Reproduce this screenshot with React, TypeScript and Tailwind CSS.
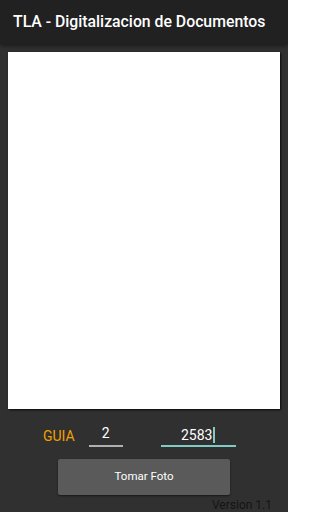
import { useState } from 'react';

const App = () => {
  const [guia, setGuia] = useState('2');
  const numero = '2583';

  return (
    <div className="flex h-[512px] w-[288px] flex-col overflow-hidden bg-[#303030] font-['Roboto',sans-serif]">
      <header className="relative z-10 flex h-[44px] shrink-0 items-center bg-[#212121] pl-[13px] shadow-[0_2px_4px_rgba(0,0,0,0.45)]">
        <h1 className="text-[15.8px] font-medium text-white">TLA - Digitalizacion de Documentos</h1>
      </header>

      <div className="ml-[8px] mt-[8px] h-[357px] w-[272px] shrink-0 bg-white shadow-[1px_1px_2px_rgba(0,0,0,0.8)]" />

      <div className="mt-[14px] flex h-[24px] shrink-0 items-end">
        <span className="ml-[43px] pb-[4px] text-[14px] leading-none text-[#f0a000]">GUIA</span>
        <label className="ml-[14px] flex w-[34px] flex-col items-center">
          <input
            value={guia}
            onChange={(e) => setGuia(e.target.value)}
            className="w-full bg-transparent text-center text-[14px] leading-none text-white outline-none"
          />
          <span className="mt-[4px] h-[2px] w-full bg-[#b0b0b0]" />
        </label>
        <div className="ml-[38px] flex w-[75px] flex-col items-center">
          <span className="flex items-center text-[14px] leading-none text-white">
            {numero}
            <span className="ml-[1px] h-[16px] w-[2px] bg-[#80cbc4]" />
          </span>
          <span className="mt-[2px] h-[2px] w-full bg-[#80cbc4]" />
        </div>
      </div>

      <button className="ml-[58px] mt-[12px] h-[36px] w-[172px] shrink-0 rounded-[2px] bg-[#5a5a5a] text-[11.5px] text-white shadow-[0_1px_2px_rgba(0,0,0,0.5)]">
        Tomar Foto
      </button>

      <div className="mr-[16px] mt-[4px] text-right text-[12px] leading-none text-[#141414]">Version 1.1</div>
    </div>
  );
};

export default App;
